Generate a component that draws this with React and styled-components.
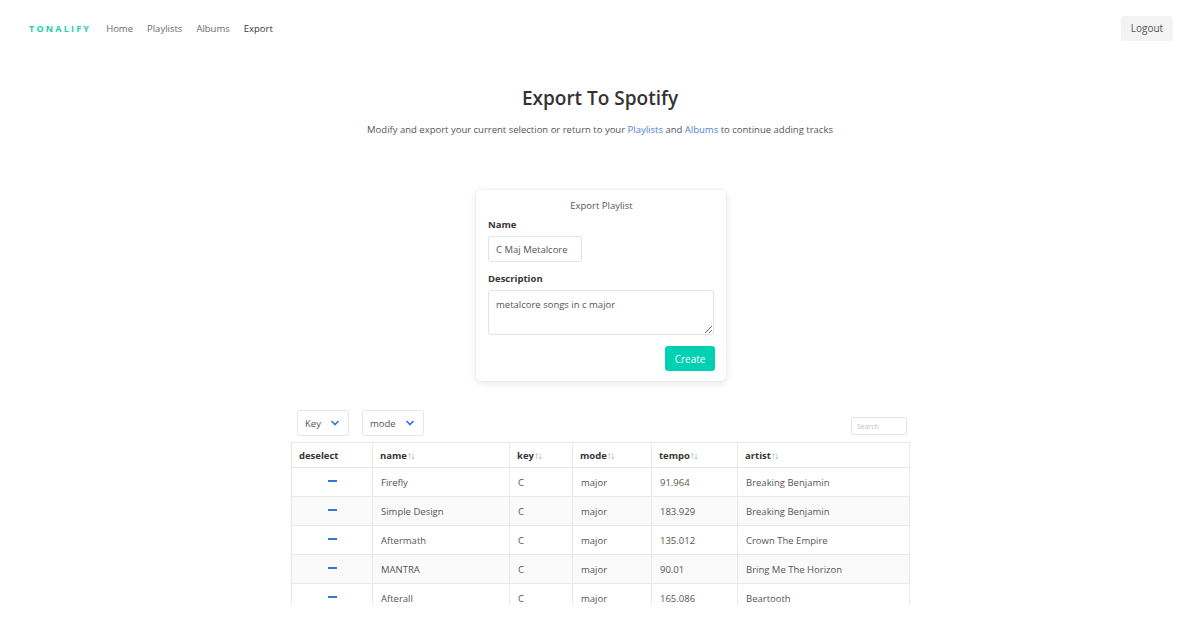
import React from 'react'
import styled, { createGlobalStyle } from 'styled-components'

const GlobalStyle = createGlobalStyle`
  html, body {
    margin: 0;
    padding: 0;
    background: #fff;
    font-family: "Open Sans", "Noto Sans", sans-serif;
    color: #4a4a4a;
  }
  * { box-sizing: border-box; }
`;

const tracks = [
  { name: 'Firefly', key: 'C', mode: 'major', tempo: '91.964', artist: 'Breaking Benjamin' },
  { name: 'Simple Design', key: 'C', mode: 'major', tempo: '183.929', artist: 'Breaking Benjamin' },
  { name: 'Aftermath', key: 'C', mode: 'major', tempo: '135.012', artist: 'Crown The Empire' },
  { name: 'MANTRA', key: 'C', mode: 'major', tempo: '90.01', artist: 'Bring Me The Horizon' },
  { name: 'Afterall', key: 'C', mode: 'major', tempo: '165.086', artist: 'Beartooth' },
];

const columns = [
  { label: 'deselect', width: 81, sort: false },
  { label: 'name', width: 137, sort: true },
  { label: 'key', width: 63, sort: true },
  { label: 'mode', width: 79, sort: true },
  { label: 'tempo', width: 86, sort: true },
  { label: 'artist', width: 172, sort: true },
];

const Chevron = () => (
  <svg width="10" height="10" viewBox="0 0 10 10">
    <path d="M1.5 3 L5 6.5 L8.5 3" fill="none" stroke="#3273dc" strokeWidth="1.6" />
  </svg>
);

const App = () => {
  return (
    <Page>
      <GlobalStyle />
      <Nav>
        <NavLeft>
          <Brand>TONALIFY</Brand>
          <NavLink>Home</NavLink>
          <NavLink>Playlists</NavLink>
          <NavLink>Albums</NavLink>
          <NavLink active>Export</NavLink>
        </NavLeft>
        <LogoutButton>Logout</LogoutButton>
      </Nav>

      <Hero>
        <Title>Export To Spotify</Title>
        <Subtitle>
          Modify and export your current selection or return to your <a>Playlists</a> and <a>Albums</a> to continue adding tracks
        </Subtitle>
      </Hero>

      <Card>
        <CardTitle>Export Playlist</CardTitle>
        <Label>Name</Label>
        <NameInput defaultValue="C Maj Metalcore" />
        <Label>Description</Label>
        <DescArea defaultValue="metalcore songs in c major" />
        <Actions>
          <CreateButton>Create</CreateButton>
        </Actions>
      </Card>

      <TableSection>
        <Controls>
          <Filters>
            <Select>Key <Chevron /></Select>
            <Select>mode <Chevron /></Select>
          </Filters>
          <SearchInput placeholder="Search" />
        </Controls>
        <TableWrap>
          <Table>
            <thead>
              <tr>
                {columns.map((c) => (
                  <Th key={c.label} style={{ width: c.width }}>
                    {c.label}{c.sort && <Arrows>↑↓</Arrows>}
                  </Th>
                ))}
              </tr>
            </thead>
            <tbody>
              {tracks.map((t, i) => (
                <Row key={i} striped={i % 2 === 1}>
                  <Td center><Minus /></Td>
                  <Td>{t.name}</Td>
                  <Td>{t.key}</Td>
                  <Td>{t.mode}</Td>
                  <Td>{t.tempo}</Td>
                  <Td>{t.artist}</Td>
                </Row>
              ))}
            </tbody>
          </Table>
        </TableWrap>
      </TableSection>
    </Page>
  )
}

const Page = styled.div`
  width: 1200px;
  height: 625px;
  overflow: hidden;
`;

const Nav = styled.nav`
  height: 56px;
  display: flex;
  align-items: center;
  justify-content: space-between;
  padding: 0 27px 0 29px;
`;

const NavLeft = styled.div`
  display: flex;
  align-items: center;
`;

const Brand = styled.span`
  font-size: 9px;
  font-weight: 700;
  letter-spacing: 2.2px;
  color: #1fcfa8;
  margin-right: 15px;
`;

const NavLink = styled.span`
  font-size: 9.5px;
  color: ${(p) => (p.active ? '#363636' : '#6a6a6a')};
  margin-right: 14px;
`;

const LogoutButton = styled.button`
  border: 0;
  border-radius: 3px;
  background: #f3f3f3;
  color: #555;
  font-family: inherit;
  font-size: 10px;
  width: 52px;
  height: 25px;
`;

const Hero = styled.div`
  text-align: center;
  padding-top: 27px;
`;

const Title = styled.h1`
  margin: 0;
  font-size: 19px;
  font-weight: 600;
  color: #333;
  line-height: 30px;
`;

const Subtitle = styled.p`
  margin: 9px 0 0;
  font-size: 9.5px;
  color: #555;
  line-height: 16px;

  a {
    color: #4a7fdc;
  }
`;

const Card = styled.div`
  width: 250px;
  margin: 52px auto 0;
  padding: 9px 11px 10px 12px;
  background: #fff;
  border-radius: 5px;
  box-shadow: 0 2px 8px rgba(10, 10, 10, 0.1), 0 0 0 1px rgba(10, 10, 10, 0.02);
  display: flex;
  flex-direction: column;
  transform: translateX(1px);
`;

const CardTitle = styled.div`
  text-align: center;
  font-size: 9.5px;
  color: #555;
  line-height: 14px;
`;

const Label = styled.div`
  font-size: 9.5px;
  font-weight: 700;
  color: #363636;
  line-height: 14px;
  margin-top: 5px;
  margin-bottom: 4px;
`;

const NameInput = styled.input`
  width: 94px;
  height: 26px;
  border: 1px solid #e3e3e3;
  border-radius: 3px;
  padding: 0 7px;
  font-family: inherit;
  font-size: 9.5px;
  color: #555;
  outline: 0;
  margin-bottom: 5px;
`;

const DescArea = styled.textarea`
  width: 226px;
  height: 45px;
  border: 1px solid #e3e3e3;
  border-radius: 3px;
  padding: 7px 7px;
  font-family: inherit;
  font-size: 9.5px;
  color: #555;
  outline: 0;
  resize: vertical;
`;

const Actions = styled.div`
  display: flex;
  justify-content: flex-end;
  margin-top: 11px;
`;

const CreateButton = styled.button`
  border: 0;
  border-radius: 3px;
  background: #00d1b2;
  color: #fff;
  font-family: inherit;
  font-size: 10px;
  width: 50px;
  height: 25px;
`;

const TableSection = styled.div`
  width: 620px;
  margin: 29px auto 0;
  padding-left: 1px;
`;

const Controls = styled.div`
  display: flex;
  align-items: flex-start;
  justify-content: space-between;
  padding: 0 3px 0 6px;
  height: 32px;
`;

const Filters = styled.div`
  display: flex;
  gap: 13px;
`;

const Select = styled.div`
  height: 26px;
  display: flex;
  align-items: center;
  gap: 9px;
  padding: 0 8px 0 7px;
  border: 1px solid #e6e6e6;
  border-radius: 3px;
  font-size: 9.5px;
  color: #555;
`;

const SearchInput = styled.input`
  width: 56px;
  height: 18px;
  margin-top: 7px;
  border: 1px solid #e3e3e3;
  border-radius: 2px;
  padding: 0 5px;
  font-family: inherit;
  font-size: 7px;
  outline: 0;

  &::placeholder {
    color: #c4c4c4;
  }
`;

const TableWrap = styled.div`
  height: 163px;
  overflow: hidden;
  padding-right: 1px;
`;

const Table = styled.table`
  width: 618px;
  border-collapse: collapse;
  table-layout: fixed;
  border: 1px solid #e8e8e8;
`;

const Th = styled.th`
  height: 25px;
  padding: 0 7px;
  text-align: left;
  font-size: 9.5px;
  font-weight: 700;
  color: #363636;
  border: 1px solid #e8e8e8;
`;

const Arrows = styled.span`
  font-size: 10px;
  font-weight: 400;
  color: #999;
  letter-spacing: -1.5px;
`;

const Row = styled.tr`
  background: ${(p) => (p.striped ? '#fafafa' : '#fff')};
`;

const Td = styled.td`
  height: 29px;
  padding: 0 8px;
  font-size: 9.5px;
  color: #555;
  border: 1px solid #e8e8e8;
  text-align: ${(p) => (p.center ? 'center' : 'left')};
`;

const Minus = styled.span`
  display: block;
  margin: 0 auto 2px;
  width: 9px;
  height: 2px;
  background: #3273dc;
`;

export default App
